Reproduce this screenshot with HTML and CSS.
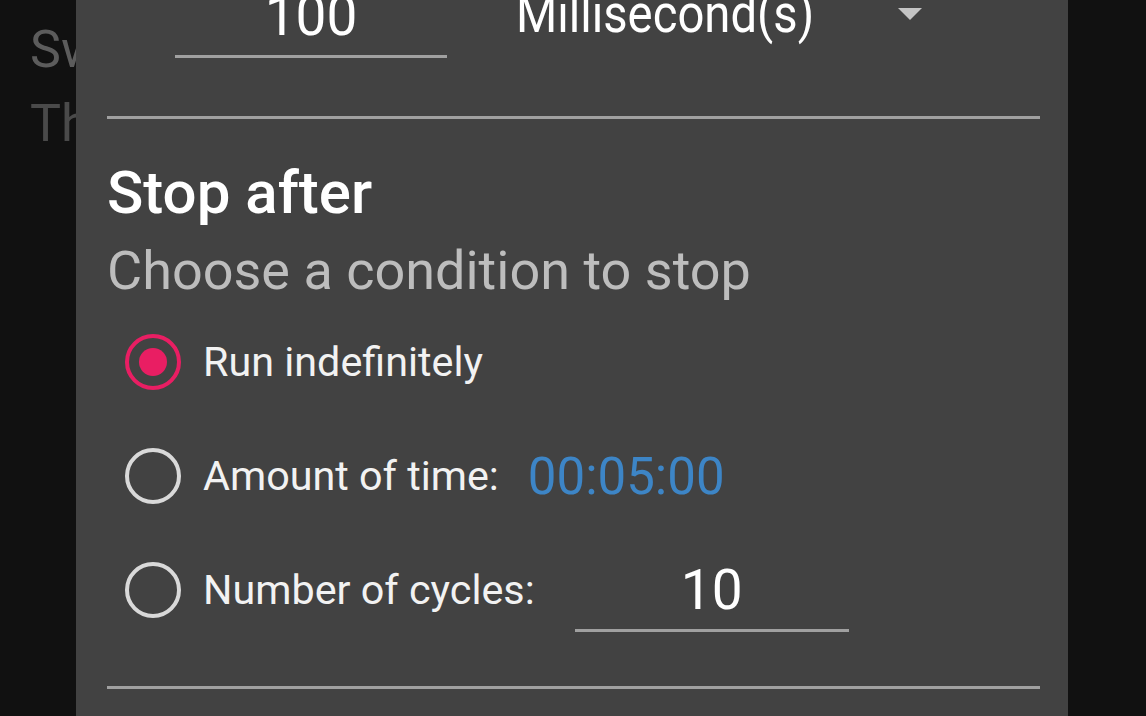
FILE: index.html
```html
<!DOCTYPE html>
<html>
<head>
<meta charset="utf-8">
<link rel="stylesheet" href="styles.css">
</head>
<body>
<div class="backdrop">
  <div class="bg-title">Switch interval</div>
  <div class="bg-sub">The time between switches</div>
</div>
<div class="dialog">
  <div class="interval-row">
    <div class="field interval-field">100</div>
    <div class="dropdown">
      <span class="dropdown-text">Millisecond(s)</span>
      <svg class="caret" width="24" height="12" viewBox="0 0 24 12"><path d="M0 0 L24 0 L12 12 Z" fill="#c4c4c4"/></svg>
    </div>
  </div>
  <div class="divider"></div>
  <div class="section-title">Stop after</div>
  <div class="section-sub">Choose a condition to stop</div>
  <div class="radio-list">
    <div class="radio-row">
      <span class="radio checked"></span>
      <span class="radio-label">Run indefinitely</span>
    </div>
    <div class="radio-row">
      <span class="radio"></span>
      <span class="radio-label">Amount of time:</span>
      <span class="time-value">00:05:00</span>
    </div>
    <div class="radio-row">
      <span class="radio"></span>
      <span class="radio-label">Number of cycles:</span>
      <div class="field cycles-field">10</div>
    </div>
  </div>
  <div class="divider bottom-divider"></div>
</div>
</body>
</html>
```

FILE: styles.css
```css
html, body {
  margin: 0;
  padding: 0;
  width: 1146px;
  height: 716px;
  overflow: hidden;
  background: #111111;
  font-family: Roboto, "Liberation Sans", sans-serif;
}
.backdrop {
  padding: 19px 0 0 30px;
}
.bg-title {
  font-size: 52px;
  color: #5c5c5c;
  line-height: 62px;
  white-space: nowrap;
}
.bg-sub {
  font-size: 52px;
  color: #4a4a4a;
  line-height: 62px;
  margin-top: 12px;
  white-space: nowrap;
}
.dialog {
  position: absolute;
  left: 76px;
  top: -60px;
  width: 992px;
  height: 900px;
  box-sizing: border-box;
  background: #424242;
  padding: 0 28px 0 31px;
  color: #ffffff;
}
.interval-row {
  height: 176px;
  box-sizing: border-box;
  padding-bottom: 58px;
  display: flex;
  align-items: flex-end;
}
.field {
  box-sizing: border-box;
  border-bottom: 3px solid #a0a0a0;
  text-align: center;
  color: #ffffff;
  font-size: 55px;
  line-height: 60px;
  padding-bottom: 9px;
}
.interval-field {
  width: 272px;
  margin-left: 68px;
}
.dropdown {
  display: flex;
  align-items: flex-start;
  justify-content: space-between;
  margin-left: 69px;
  margin-bottom: 14px;
  width: 406px;
}
.dropdown-text {
  display: inline-block;
  font-size: 54px;
  line-height: 60px;
  color: #ffffff;
  white-space: nowrap;
  transform: scaleX(0.875);
  transform-origin: left center;
}
.caret {
  margin-top: 24px;
}
.divider {
  height: 3px;
  background: #a0a0a0;
}
.section-title {
  font-size: 60px;
  font-weight: 500;
  line-height: 70px;
  margin-top: 39px;
  color: #ffffff;
}
.section-sub {
  font-size: 54px;
  line-height: 64px;
  margin-top: 11px;
  color: #bdbdbd;
}
.radio-list {
  margin-top: 2px;
}
.radio-row {
  height: 114px;
  display: flex;
  align-items: center;
  padding-left: 18px;
}
.radio {
  width: 56px;
  height: 56px;
  box-sizing: border-box;
  border: 4px solid #d9d9d9;
  border-radius: 50%;
  flex: none;
  position: relative;
}
.radio.checked {
  border-color: #e91e63;
}
.radio.checked::after {
  content: "";
  position: absolute;
  left: 10px;
  top: 10px;
  width: 28px;
  height: 28px;
  border-radius: 50%;
  background: #e91e63;
}
.radio-label {
  margin-left: 22px;
  font-size: 41.3px;
  color: #f2f2f2;
}
.time-value {
  margin-left: 29px;
  font-size: 51px;
  color: #3d85c6;
}
.cycles-field {
  width: 274px;
  margin-left: 40px;
  margin-top: 12px;
}
.bottom-divider {
  margin-top: 39px;
}
```
